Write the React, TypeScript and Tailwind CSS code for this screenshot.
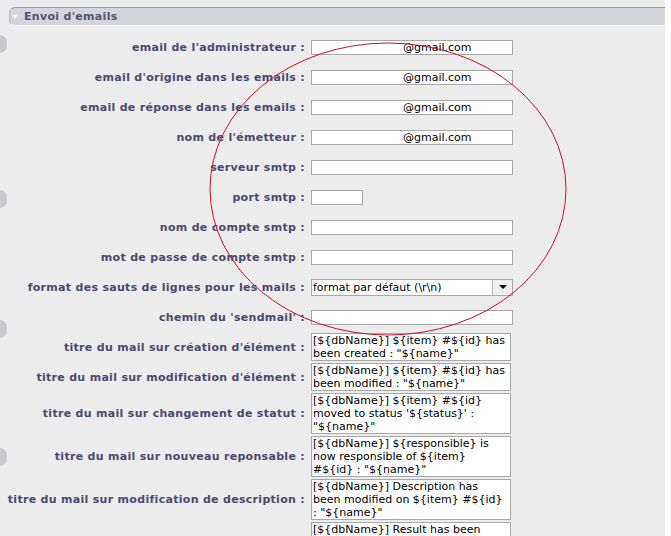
import React from "react";

const labelCls =
  "flex items-center justify-end pt-[2px] text-[11px] font-bold tracking-[0.3px] text-[#4a4a70] whitespace-nowrap";

interface FieldRowProps {
  label: string;
  children: React.ReactNode;
}

const FieldRow: React.FC<FieldRowProps> = ({ label, children }) => (
  <>
    <div className={`${labelCls} h-[30px]`}>{label}</div>
    <div className="flex items-center h-[30px]">{children}</div>
  </>
);

const TextBox: React.FC<{ value?: string; width?: string }> = ({
  value,
  width = "w-[202px]",
}) => (
  <div
    className={`${width} h-[15px] bg-white border border-[#a8a8a8] text-[11px] leading-[13px] text-black ${
      value ? "pl-[91px]" : ""
    }`}
  >
    {value}
  </div>
);

interface AreaRowProps {
  label: string;
  lines: string[];
}

const AreaRow: React.FC<AreaRowProps> = ({ label, lines }) => (
  <>
    <div className={labelCls}>{label}</div>
    <div className="w-[200px] bg-white border border-[#a8a8a8] px-[1px] text-[11px] leading-[13px] text-black whitespace-pre">
      {lines.map((l, i) => (
        <div key={i}>{l}</div>
      ))}
    </div>
  </>
);

const knobs = [34, 189, 319, 447];

export default function App() {
  return (
    <div className="relative w-[665px] min-h-screen bg-[#ececec] pt-[7px] pb-[20px] font-['DejaVu_Sans',sans-serif] overflow-hidden">
      {knobs.map((t) => (
        <div
          key={t}
          className="absolute -left-[8px] w-[16px] h-[20px] rounded-full bg-[#c9c9cd] border border-[#f4f4f4]"
          style={{ top: t }}
        />
      ))}

      <div className="ml-[9px] w-[656px] h-[19px] flex items-center bg-[#d5d5dc] border-t border-[#9c9c9c] border-b border-b-[#f6f6f6] border-l border-l-[#b4b4bc] rounded-l-[6px] pl-[2px]">
        <div className="w-0 h-0 border-l-[3px] border-r-[3px] border-t-[4px] border-l-transparent border-r-transparent border-t-[#f6f6f6]" />
        <span className="ml-[6px] mt-[2px] text-[11px] font-bold tracking-[0.3px] text-[#545474]">
          Envoi d'emails
        </span>
      </div>

      <div className="grid grid-cols-[305px_auto] gap-x-[6px] mt-[6px]">
        <FieldRow label="email de l'administrateur :">
          <TextBox value="@gmail.com" />
        </FieldRow>
        <FieldRow label="email d'origine dans les emails :">
          <TextBox value="@gmail.com" />
        </FieldRow>
        <FieldRow label="email de réponse dans les emails :">
          <TextBox value="@gmail.com" />
        </FieldRow>
        <FieldRow label="nom de l'émetteur :">
          <TextBox value="@gmail.com" />
        </FieldRow>
        <FieldRow label="serveur smtp :">
          <TextBox />
        </FieldRow>
        <FieldRow label="port smtp :">
          <TextBox width="w-[52px]" />
        </FieldRow>
        <FieldRow label="nom de compte smtp :">
          <TextBox />
        </FieldRow>
        <FieldRow label="mot de passe de compte smtp :">
          <TextBox />
        </FieldRow>
        <FieldRow label="format des sauts de lignes pour les mails :">
          <div className="w-[202px] h-[17px] flex bg-white border border-[#a8a8a8] text-[11px] leading-[15px] text-black">
            <span className="flex-1 pl-[1px]">format par défaut (\r\n)</span>
            <div className="w-[20px] flex items-center justify-center bg-[#efefef] border-l border-[#b4b4b4]">
              <div className="w-0 h-0 border-l-[4px] border-r-[4px] border-t-[4px] border-l-transparent border-r-transparent border-t-black" />
            </div>
          </div>
        </FieldRow>
        <FieldRow label="chemin du 'sendmail' :">
          <TextBox />
        </FieldRow>
      </div>

      <div className="grid grid-cols-[305px_auto] gap-x-[6px] gap-y-[2px] mt-[1px]">
        <AreaRow
          label="titre du mail sur création d'élément :"
          lines={["[${dbName}] ${item} #${id} has", 'been created : "${name}"']}
        />
        <AreaRow
          label="titre du mail sur modification d'élément :"
          lines={["[${dbName}] ${item} #${id} has", 'been modified : "${name}"']}
        />
        <AreaRow
          label="titre du mail sur changement de statut :"
          lines={[
            "[${dbName}] ${item} #${id}",
            "moved to status '${status}' :",
            '"${name}"',
          ]}
        />
        <AreaRow
          label="titre du mail sur nouveau reponsable :"
          lines={[
            "[${dbName}] ${responsible} is",
            "now responsible of ${item}",
            '#${id} : "${name}"',
          ]}
        />
        <AreaRow
          label="titre du mail sur modification de description :"
          lines={[
            "[${dbName}] Description has",
            "been modified on ${item} #${id}",
            ': "${name}"',
          ]}
        />
        <AreaRow
          label="titre du mail sur modification de résultat :"
          lines={[
            "[${dbName}] Result has been",
            "modified on ${item} #${id} :",
            '"${name}"',
          ]}
        />
      </div>

      <svg
        className="absolute left-0 top-0 pointer-events-none"
        width="665"
        height="536"
        viewBox="0 0 665 536"
      >
        <ellipse
          cx="388"
          cy="189"
          rx="178"
          ry="146"
          fill="none"
          stroke="#c8102e"
          strokeWidth="1"
        />
      </svg>
    </div>
  );
}
